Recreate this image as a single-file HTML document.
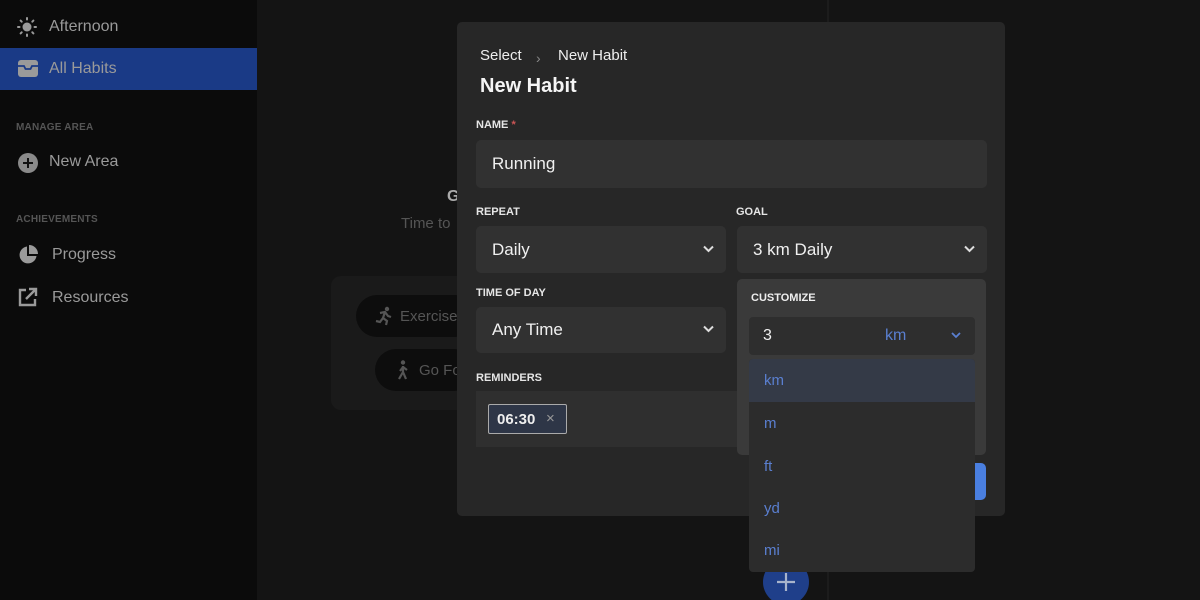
<!DOCTYPE html>
<html style="overflow:hidden;width:1200px;height:600px"><head><meta charset="utf-8"><style>
*{box-sizing:border-box;margin:0;padding:0}
body{width:1200px;height:600px;overflow:hidden;background:#141414;font-family:"Liberation Sans",sans-serif;position:relative}
.a{position:absolute}
.side{left:0;top:0;width:257px;height:600px;background:#0b0b0b}
.item{position:absolute;left:0;width:257px;height:42px;display:flex;align-items:center;color:#9a9a9a;font-size:16px}
.sec{position:absolute;left:16px;font-size:10px;font-weight:bold;color:#555;letter-spacing:.2px}
.lbl{position:absolute;font-size:11px;font-weight:bold;color:#e6e6e6}
.inp{position:absolute;background:#313131;border-radius:5px;color:#f0f0f0;font-size:17px;display:flex;align-items:center;padding-left:16px}
.chev{position:absolute;right:12px;top:50%;margin-top:-5px}
.opt{position:absolute;left:0;width:226px;height:43px;color:#5a7fd0;font-size:15px;padding-left:15px;display:flex;align-items:center}
</style></head><body>
<div class="a side">
 <div class="item" style="top:6px">
  <svg class="a" style="left:17px;top:11px" width="20" height="20" viewBox="0 0 20 20"><circle cx="10" cy="10" r="4.5" fill="#9a9a9a"/><g stroke="#9a9a9a" stroke-width="2" stroke-linecap="round"><line x1="10" y1="1" x2="10" y2="2.5"/><line x1="10" y1="17.5" x2="10" y2="19"/><line x1="1" y1="10" x2="2.5" y2="10"/><line x1="17.5" y1="10" x2="19" y2="10"/><line x1="3.6" y1="3.6" x2="4.7" y2="4.7"/><line x1="15.3" y1="15.3" x2="16.4" y2="16.4"/><line x1="3.6" y1="16.4" x2="4.7" y2="15.3"/><line x1="15.3" y1="4.7" x2="16.4" y2="3.6"/></g></svg>
  <span style="position:absolute;left:49px">Afternoon</span></div>
 <div class="item" style="top:48px;background:#1a3a86">
  <svg class="a" style="left:18px;top:12px" width="20" height="17" viewBox="0 0 20 17"><rect x="0" y="0" width="20" height="17" rx="3" fill="#9a9a9a"/><path d="M0 6h6l1.5 3h5L14 6h6" stroke="#1a3a86" stroke-width="1.8" fill="none"/></svg>
  <span style="position:absolute;left:49px">All Habits</span></div>
 <div class="sec" style="top:122px">MANAGE AREA</div>
 <div class="item" style="top:141px">
  <svg class="a" style="left:18px;top:12px" width="20" height="20" viewBox="0 0 20 20"><circle cx="10" cy="10" r="10" fill="#8a8a8a"/><path d="M10 5v10M5 10h10" stroke="#111" stroke-width="2"/></svg>
  <span style="position:absolute;left:49px">New Area</span></div>
 <div class="sec" style="top:214px">ACHIEVEMENTS</div>
 <div class="item" style="top:234px">
  <svg class="a" style="left:18px;top:11px" width="20" height="20" viewBox="0 0 20 20"><path d="M9 1.5A8.5 8.5 0 1 0 18.5 11H9z" fill="#9a9a9a"/><path d="M11 0v9h9A9 9 0 0 0 11 0z" fill="#9a9a9a"/></svg>
  <span style="position:absolute;left:52px">Progress</span></div>
 <div class="item" style="top:277px">
  <svg class="a" style="left:18px;top:10px" width="20" height="20" viewBox="0 0 20 20"><path d="M8 3H2v15h15v-6" stroke="#9a9a9a" stroke-width="2.4" fill="none"/><path d="M8 12L18 2M11 2h7v7" stroke="#9a9a9a" stroke-width="2.4" fill="none"/></svg>
  <span style="position:absolute;left:52px">Resources</span></div>
</div>
<div class="a" style="left:827px;top:0;width:2px;height:600px;background:#1c1c1c"></div>
<div class="a" style="left:447px;top:188px;color:#aaa;font-weight:bold;font-size:16px">G</div>
<div class="a" style="left:401px;top:215px;color:#555;font-size:15px">Time to</div>
<div class="a" style="left:331px;top:276px;width:140px;height:134px;background:#1a1a1a;border-radius:10px"></div>
<div class="a" style="left:356px;top:295px;width:120px;height:42px;background:#0d0d0d;border-radius:21px;color:#555;font-size:15px;padding:13px 0 0 44px">Exercise</div>
<div class="a" style="left:375px;top:349px;width:100px;height:42px;background:#0d0d0d;border-radius:21px;color:#555;font-size:15px;padding:13px 0 0 44px">Go Fo</div>
<svg class="a" style="left:374px;top:306px" width="20" height="20" viewBox="0 0 20 20"><circle cx="13" cy="3" r="2.2" fill="#555"/><path d="M6 7l5-1 3 4 3 1M11 6l-2 6 4 3-1 4M9 12l-3 4-4-1" stroke="#555" stroke-width="2.2" fill="none"/></svg>
<svg class="a" style="left:394px;top:360px" width="18" height="20" viewBox="0 0 18 20"><circle cx="9" cy="2.5" r="2.2" fill="#555"/><path d="M9 6v6l3 7M9 12l-4 7M9 7l-3 4M9 7l4 3" stroke="#555" stroke-width="2.2" fill="none"/></svg>
<div class="a" style="left:763px;top:559px;width:46px;height:41px;overflow:hidden"><div style="width:46px;height:46px;border-radius:50%;background:#1f3f8a;position:relative"><svg class="a" style="left:13px;top:13px" width="20" height="20"><path d="M10 1v18M1 10h18" stroke="#a8b4cc" stroke-width="2.2"/></svg></div></div>

<div class="a" style="left:457px;top:22px;width:548px;height:494px;background:#272727;border-radius:5px">
 <div class="a" style="left:23px;top:25px;color:#eee;font-size:15px">Select</div>
 <div class="a" style="left:79px;top:28px;color:#888;font-size:14px">&#x203A;</div>
 <div class="a" style="left:101px;top:25px;color:#eee;font-size:15px">New Habit</div>
 <div class="a" style="left:23px;top:53px;color:#f5f5f5;font-size:20px;font-weight:bold">New Habit</div>
 <div class="lbl" style="left:19px;top:97px">NAME <span style="color:#c55">*</span></div>
 <div class="inp" style="left:19px;top:118px;width:511px;height:48px">Running</div>
 <div class="lbl" style="left:19px;top:184px">REPEAT</div>
 <div class="inp" style="left:19px;top:204px;width:250px;height:47px">Daily<svg class="chev" width="11" height="8"><path d="M1 1.5l4.5 4.5 4.5-4.5" stroke="#ddd" stroke-width="2" fill="none"/></svg></div>
 <div class="lbl" style="left:279px;top:184px">GOAL</div>
 <div class="inp" style="left:280px;top:204px;width:250px;height:47px">3 km Daily<svg class="chev" width="11" height="8"><path d="M1 1.5l4.5 4.5 4.5-4.5" stroke="#ddd" stroke-width="2" fill="none"/></svg></div>
 <div class="lbl" style="left:19px;top:265px">TIME OF DAY</div>
 <div class="inp" style="left:19px;top:285px;width:250px;height:46px">Any Time<svg class="chev" width="11" height="8"><path d="M1 1.5l4.5 4.5 4.5-4.5" stroke="#ddd" stroke-width="2" fill="none"/></svg></div>
 <div class="lbl" style="left:19px;top:350px">REMINDERS</div>
 <div class="a" style="left:19px;top:369px;width:300px;height:56px;background:#2f2f2f"></div>
 <div class="a" style="left:31px;top:382px;width:79px;height:30px;background:#2e3647;border:1px solid #aaa;border-radius:2px;color:#eee;font-size:15px;font-weight:bold;padding:6px 0 0 8px">06:30<span style="position:absolute;left:57px;top:5px;color:#999;font-weight:normal">×</span></div>
 <div class="a" style="left:470px;top:441px;width:59px;height:37px;background:#4a7fe0;border-radius:5px"></div>
</div>
<div class="a" style="left:737px;top:279px;width:249px;height:176px;background:#3a3a3a;border-radius:5px">
 <div class="a" style="left:14px;top:13px;font-size:11px;font-weight:bold;color:#eee">CUSTOMIZE</div>
 <div class="a" style="left:12px;top:38px;width:226px;height:38px;background:#2e2e2e;border-radius:4px">
  <span class="a" style="left:14px;top:10px;color:#f0f0f0;font-size:16px">3</span>
  <span class="a" style="left:136px;top:10px;color:#5a7fd0;font-size:16px">km</span>
  <svg class="a" style="left:202px;top:15px" width="10" height="7"><path d="M1 1l4 4 4-4" stroke="#5a7fd0" stroke-width="1.8" fill="none"/></svg>
 </div>
</div>
<div class="a" style="left:749px;top:359px;width:226px;height:213px;background:#2c2c2c;border-radius:4px;overflow:hidden">
 <div class="opt" style="top:0;background:#343a47">km</div>
 <div class="opt" style="top:43px">m</div>
 <div class="opt" style="top:86px">ft</div>
 <div class="opt" style="top:128px">yd</div>
 <div class="opt" style="top:170px">mi</div>
</div>
</body></html>
